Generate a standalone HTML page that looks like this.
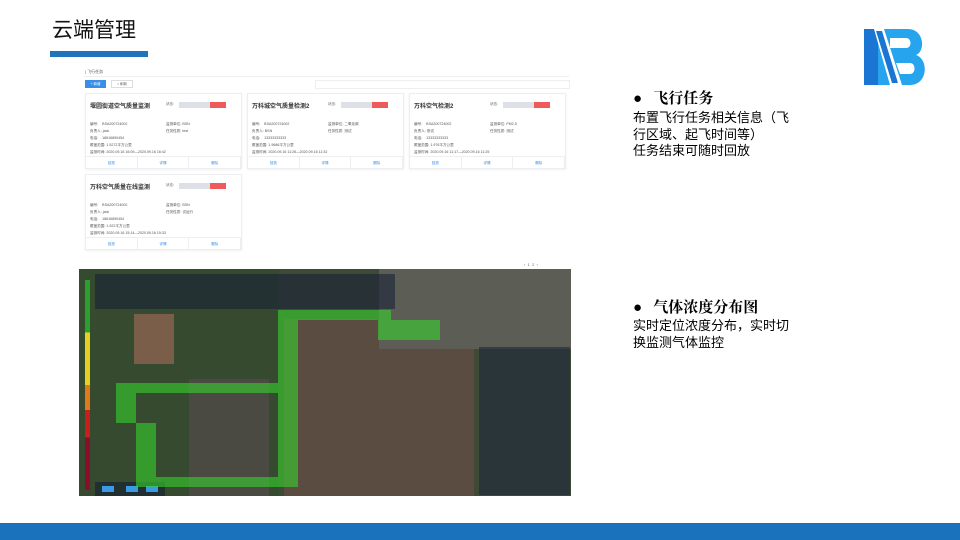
<!DOCTYPE html>
<html><head><meta charset="utf-8"><style>
*{margin:0;padding:0;box-sizing:border-box}
body{width:960px;height:540px;background:#fff;position:relative;overflow:hidden;font-family:"Liberation Sans","Noto Sans CJK SC",sans-serif}
.a{position:absolute}
.card{position:absolute;width:157px;height:76px;background:#fff;border:1px solid #eceef2;box-shadow:0 1px 2px rgba(0,0,0,.06)}
.card .t{position:absolute;left:4px;top:7px;font-size:6px;font-weight:bold;color:#333}
.card .st{position:absolute;left:80px;top:8px;font-size:3.5px;color:#666}
.card .bar{position:absolute;left:93px;top:8px;width:47px;height:6px;background:#dde0e6}
.card .bar i{position:absolute;right:0;top:0;width:16px;height:6px;background:#ef5b5b}
.card .rows{position:absolute;left:4px;top:27px;font-size:3.6px;color:#555;line-height:7px}
.card .rows2{position:absolute;left:80px;top:27px;font-size:3.6px;color:#555;line-height:7px}
.card .ft{position:absolute;left:0;right:0;bottom:0;height:12px;border-top:1px solid #eee;display:flex;font-size:3.6px;color:#3a8ee6}
.card .ft span{flex:1;text-align:center;line-height:12px;border-right:1px solid #eee}
.g{position:absolute;background:rgba(55,210,45,.6)}
.p{font-size:15px;color:#000;line-height:16.5px}
.b{position:absolute}
</style></head><body>
<div class="a" style="left:52px;top:14px;font-size:21px;color:#111">云端管理</div>
<div class="a" style="left:50px;top:51px;width:98px;height:6px;background:#1f74bb"></div>
<svg class="a" style="left:862px;top:29px" width="66" height="56" viewBox="0 0 66 56">
<path d="M14 0H46C62 0 64 22 54 26C67 30 66 56 48 56H14z" fill="#27a4ee"/>
<path d="M28 9H44C50 9 50 19 44 19H28z" fill="#fff"/>
<path d="M34 34H48C54 34 54 45 48 45H38z" fill="#fff"/>
<path d="M2 0H16V56H2z" fill="#1a76d2"/>
<path d="M12 0H22L40 56H28z" fill="#fff"/>
<path d="M14 2H20L36 54H30z" fill="#1a76d2"/>
</svg>
<div class="a" style="left:85px;top:69px;font-size:4px;color:#555">| 飞行任务</div>
<div class="a" style="left:84px;top:76px;width:485px;height:1px;background:#eee"></div>
<div class="a" style="left:85px;top:80px;width:21px;height:8px;background:#3a8ee6;color:#fff;font-size:3.5px;text-align:center;line-height:8px">+ 新增</div>
<div class="a" style="left:111px;top:80px;width:22px;height:8px;border:1px solid #ddd;font-size:3.5px;text-align:center;line-height:7px;color:#666">○ 刷新</div>
<div class="a" style="left:315px;top:80px;width:255px;height:9px;border:1px solid #eee"></div>
<div class="card" style="left:85px;top:93px"><div class="t">堰圆街道空气质量监测</div><div class="st">状态:</div><div class="bar"><i></i></div><div class="rows">编号:&nbsp;&nbsp;&nbsp; BSA200724002<br>负责人: jack<br>电话: &nbsp;&nbsp;&nbsp;18616890454<br>覆盖范围: 1.5272平方公里<br>监测时间: 2020.09.16 16:09—2020.09.16 16:42</div><div class="rows2">监测单位: BSN<br>任务性质: test</div><div class="ft"><span>回放</span><span>详情</span><span>删除</span></div></div>
<div class="card" style="left:247px;top:93px"><div class="t">万科城空气质量检测2</div><div class="st">状态:</div><div class="bar"><i></i></div><div class="rows">编号:&nbsp;&nbsp;&nbsp; BSA200724002<br>负责人: BSN<br>电话: &nbsp;&nbsp;&nbsp;13333333333<br>覆盖范围: 1.9686平方公里<br>监测时间: 2020.09.16 11:26—2020.09.16 11:32</div><div class="rows2">监测单位: 二氧化碳<br>任务性质: 测试</div><div class="ft"><span>回放</span><span>详情</span><span>删除</span></div></div>
<div class="card" style="left:409px;top:93px"><div class="t">万科空气检测2</div><div class="st">状态:</div><div class="bar"><i></i></div><div class="rows">编号:&nbsp;&nbsp;&nbsp; BSA200724002<br>负责人: 测试<br>电话: &nbsp;&nbsp;&nbsp;13333333333<br>覆盖范围: 1.976平方公里<br>监测时间: 2020.09.16 11:17—2020.09.16 11:25</div><div class="rows2">监测单位: PM2.5<br>任务性质: 测试</div><div class="ft"><span>回放</span><span>详情</span><span>删除</span></div></div>
<div class="card" style="left:85px;top:174px"><div class="t">万科空气质量在线监测</div><div class="st">状态:</div><div class="bar"><i></i></div><div class="rows">编号:&nbsp;&nbsp;&nbsp; BSA200724002<br>负责人: jack<br>电话: &nbsp;&nbsp;&nbsp;18616890454<br>覆盖范围: 1.922平方公里<br>监测时间: 2020.09.16 15:14—2020.09.16 15:33</div><div class="rows2">监测单位: BSN<br>任务性质: 试运行</div><div class="ft"><span>回放</span><span>详情</span><span>删除</span></div></div>
<div class="a" style="left:524px;top:262px;font-size:4px;color:#666">‹ &nbsp;1 &nbsp;2 &nbsp;›</div>
<div class="a" style="left:79px;top:269px;width:492px;height:227px;background:#3e4a36;overflow:hidden">
 <div class="b" style="left:0;top:0;width:200px;height:227px;background:#354a2e"></div>
 <div class="b" style="left:55px;top:45px;width:40px;height:50px;background:#7a5e4a"></div>
 <div class="b" style="left:110px;top:110px;width:80px;height:117px;background:#4a4a42"></div>
 <div class="b" style="left:205px;top:50px;width:190px;height:177px;background:#5a4c40"></div>
 <div class="b" style="left:300px;top:0;width:192px;height:80px;background:#5c5d55"></div>
 <div class="b" style="left:16px;top:5px;width:300px;height:35px;background:rgba(20,30,55,.55)"></div>
 <div class="b" style="left:400px;top:78px;width:91px;height:148px;background:rgba(30,40,60,.6)"></div>
 <div class="b" style="left:6px;top:11px;width:5px;height:210px;background:linear-gradient(#2ca02c 0 25%,#e6d21e 25% 50%,#e07a18 50% 62%,#c81e1e 62% 75%,#8a0e2a 75%)"></div>
 <div class="b" style="left:16px;top:213px;width:70px;height:14px;background:rgba(20,30,50,.6)"></div>
 <div class="b" style="left:23px;top:217px;width:12px;height:6px;background:#3a9ae6"></div>
 <div class="b" style="left:47px;top:217px;width:12px;height:6px;background:#3a9ae6"></div>
 <div class="b" style="left:67px;top:217px;width:12px;height:6px;background:#3a9ae6"></div>
</div>
<div class="g" style="left:278px;top:310px;width:20px;height:177px"></div>
<div class="g" style="left:298px;top:310px;width:93px;height:10px"></div>
<div class="g" style="left:378px;top:320px;width:62px;height:20px"></div>
<div class="g" style="left:116px;top:383px;width:162px;height:10px"></div>
<div class="g" style="left:116px;top:393px;width:20px;height:30px"></div>
<div class="g" style="left:136px;top:423px;width:20px;height:64px"></div>
<div class="g" style="left:156px;top:477px;width:122px;height:10px"></div>
<div class="a p" style="left:633px;top:91px;font-weight:bold;font-family:'Liberation Serif','Noto Serif CJK SC',serif">●&nbsp;&nbsp;&nbsp;飞行任务</div>
<div class="a p" style="left:633px;top:110px;width:160px;font-size:13px">布置飞行任务相关信息（飞行区域、起飞时间等）<br>任务结束可随时回放</div>
<div class="a p" style="left:633px;top:300px;font-weight:bold;font-family:'Liberation Serif','Noto Serif CJK SC',serif">●&nbsp;&nbsp;&nbsp;气体浓度分布图</div>
<div class="a p" style="left:633px;top:318px;width:160px;font-size:13px">实时定位浓度分布，实时切换监测气体监控</div>
<div class="a" style="left:0;top:523px;width:960px;height:17px;background:#1a72bc"></div>
</body></html>
